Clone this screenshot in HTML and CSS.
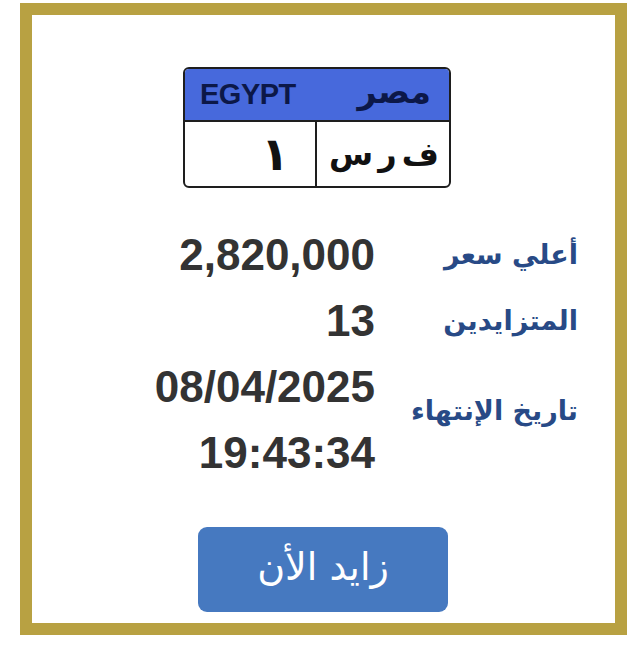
FILE: index.html
```
<!DOCTYPE html>
<html lang="ar">
<head>
<meta charset="utf-8">
<link rel="stylesheet" href="styles.css">
</head>
<body>
<div class="frame">
  <div class="plate">
    <div class="plate-head">
      <span class="head-en">EGYPT</span>
      <span class="head-ar">مصر</span>
    </div>
    <div class="plate-body">
      <div class="cell cell-num">١</div>
      <div class="cell cell-letters">ف ر س</div>
    </div>
  </div>
  <div class="info">
    <div class="label">أعلي سعر</div>
    <div class="value">2,820,000</div>
    <div class="label">المتزايدين</div>
    <div class="value">13</div>
    <div class="label label-end">تاريخ الإنتهاء</div>
    <div class="value value-multi"><span>08/04/2025</span><span>19:43:34</span></div>
  </div>
  <button class="bid">زايد الأن</button>
</div>
</body>
</html>
```
FILE: styles.css
```
html, body {
  margin: 0;
  padding: 0;
  background: #ffffff;
}
body {
  font-family: "Liberation Sans", "DejaVu Sans", Arial, sans-serif;
}
.frame {
  box-sizing: border-box;
  width: 607px;
  height: 632px;
  margin: 3px 0 0 20px;
  border: 12px solid #b8a142;
  display: flex;
  flex-direction: column;
  align-items: flex-start;
}
.plate {
  box-sizing: border-box;
  width: 268px;
  height: 121px;
  margin: 52px 0 0 151px;
  border: 2px solid #1e1e1e;
  border-radius: 6px;
  overflow: hidden;
  display: flex;
  flex-direction: column;
}
.plate-head {
  height: 51px;
  background: #4769dc;
  border-bottom: 2px solid #1e1e1e;
  display: flex;
  align-items: center;
  justify-content: space-between;
  padding: 0 18px 0 15px;
}
.head-en {
  font-size: 29px;
  font-weight: bold;
  color: #0c1848;
  letter-spacing: -0.5px;
}
.head-ar {
  font-family: "DejaVu Sans", sans-serif;
  font-size: 33px;
  font-weight: bold;
  color: #0c1848;
  line-height: 1;
  padding-bottom: 6px;
}
.plate-body {
  flex: 1;
  display: grid;
  grid-template-columns: 132px 1fr;
}
.cell {
  display: flex;
  align-items: center;
  justify-content: flex-end;
  color: #111;
}
.cell-num {
  border-right: 2px solid #1e1e1e;
  padding-right: 26px;
  font-family: "DejaVu Sans", sans-serif;
  font-size: 46px;
  font-weight: bold;
}
.cell-letters {
  padding-right: 10px;
  font-family: "DejaVu Sans", sans-serif;
  font-size: 32px;
  font-weight: bold;
  word-spacing: -6px;
}
.info {
  direction: rtl;
  align-self: stretch;
  margin-top: 34px;
  padding-right: 37px;
  display: grid;
  grid-template-columns: 180px 1fr;
  column-gap: 23px;
  line-height: 66px;
}
.label {
  font-family: "DejaVu Sans", sans-serif;
  font-size: 27px;
  font-weight: bold;
  color: #284a86;
  display: flex;
  align-items: center;
  white-space: nowrap;
}
.label-end {
  padding-bottom: 18px;
}
.value {
  font-size: 44px;
  font-weight: bold;
  color: #333333;
  text-align: right;
  direction: ltr;
  justify-self: start;
}
.value-multi {
  display: flex;
  flex-direction: column;
  align-items: flex-end;
}
.bid {
  margin: 41px 0 0 166px;
  width: 250px;
  height: 85px;
  border: none;
  border-radius: 9px;
  background: #4679c0;
  color: #ffffff;
  font-family: "DejaVu Sans", sans-serif;
  font-size: 38px;
  padding: 0 0 6px 0;
}
```
